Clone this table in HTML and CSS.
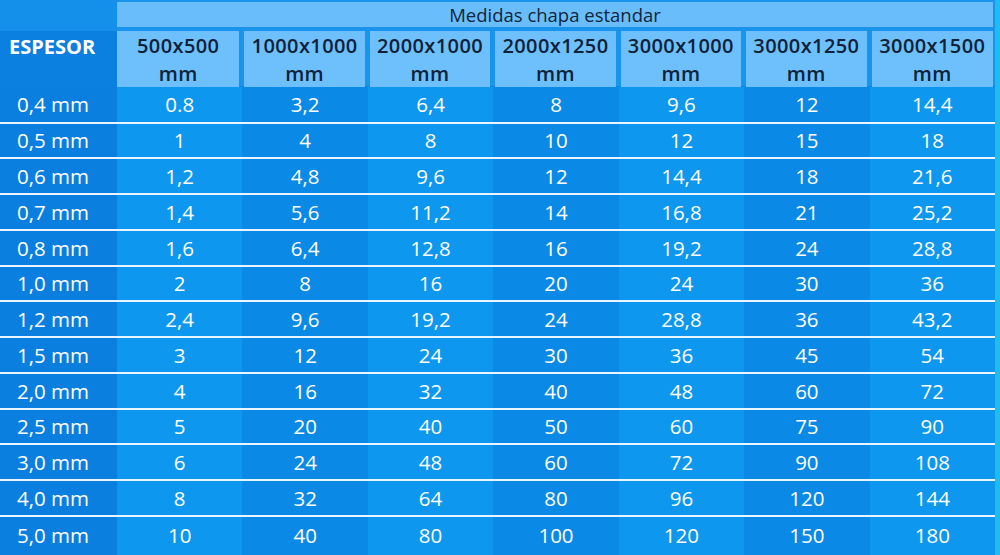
FILE: index.html
```html
<!DOCTYPE html>
<html lang="es">
<head>
<meta charset="utf-8">
<title>Medidas chapa estandar</title>
<link rel="stylesheet" href="styles.css">
</head>
<body>
<div class="sheet">
  <div class="top">
    <div class="corner"></div>
    <div class="bar">Medidas chapa estandar</div>
  </div>
  <div class="head">
    <div class="esp">ESPESOR</div>
    <div class="hc"><span>500x500<br>mm</span></div>
    <div class="hc"><span>1000x1000<br>mm</span></div>
    <div class="hc"><span>2000x1000<br>mm</span></div>
    <div class="hc"><span>2000x1250<br>mm</span></div>
    <div class="hc"><span>3000x1000<br>mm</span></div>
    <div class="hc"><span>3000x1250<br>mm</span></div>
    <div class="hc"><span>3000x1500<br>mm</span></div>
  </div>
  <div class="row first"><div class="lab">0,4 mm</div><div class="c">0.8</div><div class="c">3,2</div><div class="c">6,4</div><div class="c">8</div><div class="c">9,6</div><div class="c">12</div><div class="c">14,4</div></div>
  <div class="row"><div class="lab">0,5 mm</div><div class="c">1</div><div class="c">4</div><div class="c">8</div><div class="c">10</div><div class="c">12</div><div class="c">15</div><div class="c">18</div></div>
  <div class="row"><div class="lab">0,6 mm</div><div class="c">1,2</div><div class="c">4,8</div><div class="c">9,6</div><div class="c">12</div><div class="c">14,4</div><div class="c">18</div><div class="c">21,6</div></div>
  <div class="row"><div class="lab">0,7 mm</div><div class="c">1,4</div><div class="c">5,6</div><div class="c">11,2</div><div class="c">14</div><div class="c">16,8</div><div class="c">21</div><div class="c">25,2</div></div>
  <div class="row"><div class="lab">0,8 mm</div><div class="c">1,6</div><div class="c">6,4</div><div class="c">12,8</div><div class="c">16</div><div class="c">19,2</div><div class="c">24</div><div class="c">28,8</div></div>
  <div class="row"><div class="lab">1,0 mm</div><div class="c">2</div><div class="c">8</div><div class="c">16</div><div class="c">20</div><div class="c">24</div><div class="c">30</div><div class="c">36</div></div>
  <div class="row"><div class="lab">1,2 mm</div><div class="c">2,4</div><div class="c">9,6</div><div class="c">19,2</div><div class="c">24</div><div class="c">28,8</div><div class="c">36</div><div class="c">43,2</div></div>
  <div class="row"><div class="lab">1,5 mm</div><div class="c">3</div><div class="c">12</div><div class="c">24</div><div class="c">30</div><div class="c">36</div><div class="c">45</div><div class="c">54</div></div>
  <div class="row"><div class="lab">2,0 mm</div><div class="c">4</div><div class="c">16</div><div class="c">32</div><div class="c">40</div><div class="c">48</div><div class="c">60</div><div class="c">72</div></div>
  <div class="row"><div class="lab">2,5 mm</div><div class="c">5</div><div class="c">20</div><div class="c">40</div><div class="c">50</div><div class="c">60</div><div class="c">75</div><div class="c">90</div></div>
  <div class="row"><div class="lab">3,0 mm</div><div class="c">6</div><div class="c">24</div><div class="c">48</div><div class="c">60</div><div class="c">72</div><div class="c">90</div><div class="c">108</div></div>
  <div class="row"><div class="lab">4,0 mm</div><div class="c">8</div><div class="c">32</div><div class="c">64</div><div class="c">80</div><div class="c">96</div><div class="c">120</div><div class="c">144</div></div>
  <div class="row last"><div class="lab">5,0 mm</div><div class="c">10</div><div class="c">40</div><div class="c">80</div><div class="c">100</div><div class="c">120</div><div class="c">150</div><div class="c">180</div></div>
</div>
</body>
</html>
```

FILE: styles.css
```css
html, body {
  margin: 0;
  padding: 0;
  height: 555px;
  overflow: hidden;
  background: #1fbcf3;
}

.sheet {
  width: 995px;
  height: 555px;
  overflow: hidden;
  font-family: "Open Sans", "DejaVu Sans", sans-serif;
  background: #0a89e6;
}

.top,
.head,
.row {
  display: grid;
  grid-template-columns: 117px repeat(7, 1fr);
}

.top {
  height: 31px;
  background: #1a93ec;
}

.corner {
  background: #1490ea;
}

.bar {
  grid-column: 2 / 9;
  margin: 2px 2px 4px 0;
  background: #69bdfa;
  color: #13253a;
  font-size: 18.5px;
  line-height: 25px;
  text-align: center;
}

.head {
  height: 55px;
  background: #1994ec;
  border-bottom: 1px solid #0a84e2;
}

.esp {
  background: #0b80e0;
  color: #ffffff;
  font-weight: 700;
  font-size: 20px;
  padding: 3px 0 0 9px;
  line-height: 26px;
}

.hc {
  margin: 0 3px 1px 2px;
  background: #6dc0fb;
  color: #10223a;
  font-weight: 600;
  font-size: 20px;
  letter-spacing: 0.4px;
  line-height: 27.5px;
  text-align: center;
  display: flex;
  align-items: center;
  justify-content: center;
}

.hc span {
  padding-top: 1px;
}

.hc:nth-child(2) {
  margin-left: 0;
}

.hc:last-child {
  margin-right: 2px;
}

.row {
  height: 33.75px;
  border-bottom: 2px solid #e8f4ff;
  color: #ffffff;
  font-size: 20.5px;
}

.row.first {
  height: 34.5px;
}

.row.last {
  height: 40px;
  border-bottom: none;
}

.row > div {
  display: flex;
  align-items: center;
}

.row.last > div {
  padding-bottom: 3px;
}

.lab {
  background: #0b7fdf;
  padding-left: 17px;
}

.c {
  justify-content: center;
  background: #0b89e6;
}

.c:nth-child(2n) {
  background: #0e97ee;
}
```
